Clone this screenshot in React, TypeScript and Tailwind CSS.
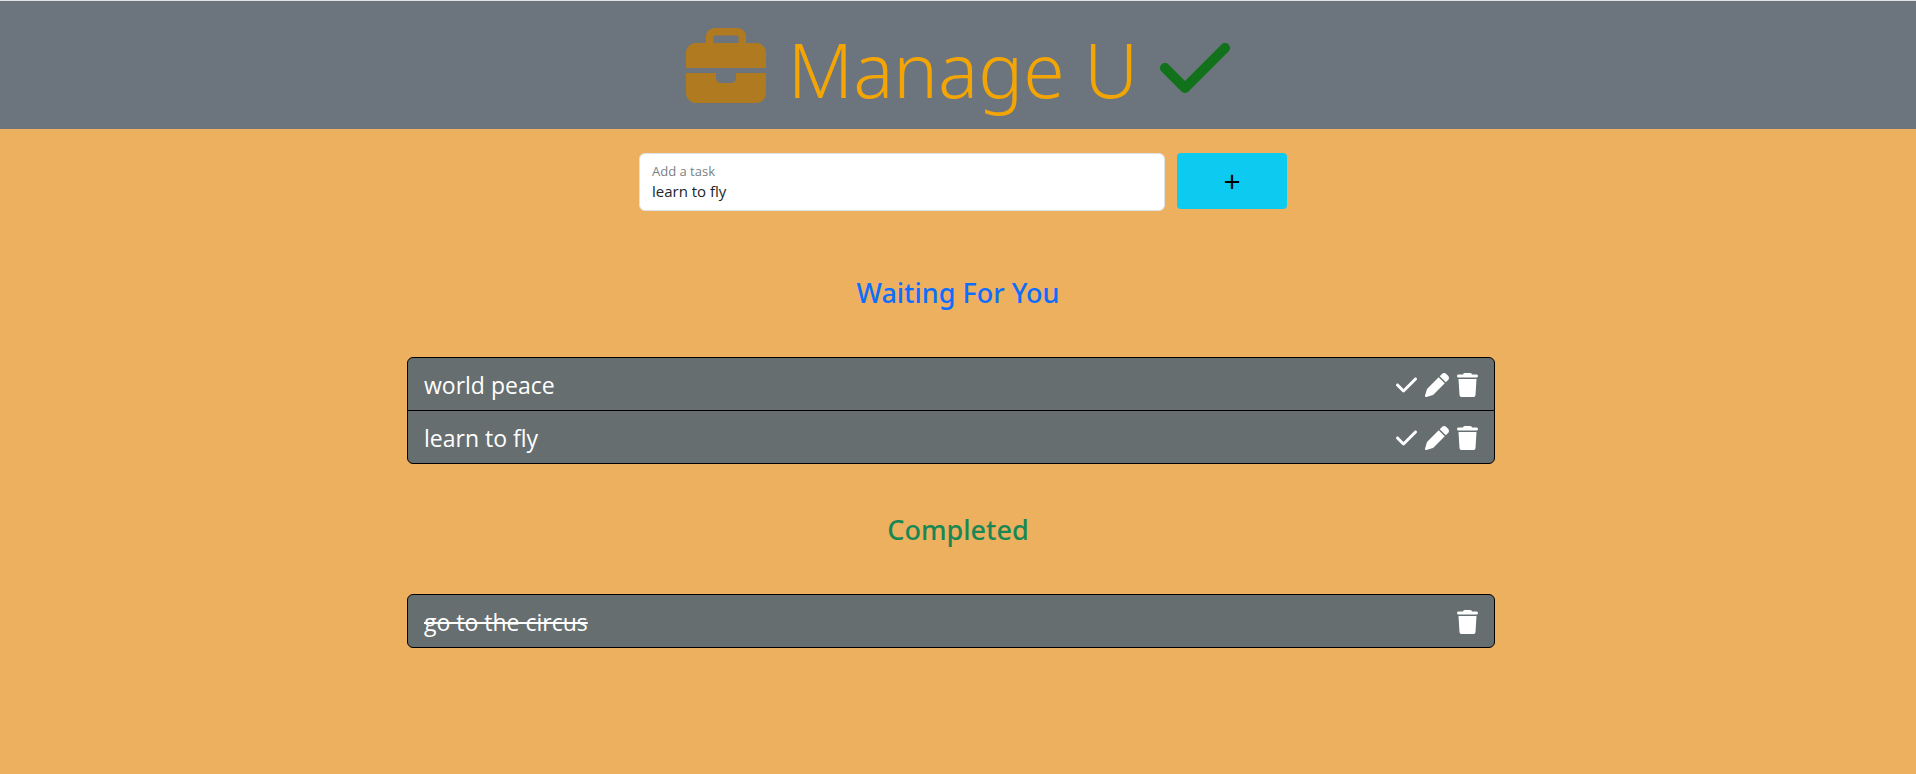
import { useState } from "react";
import { FaBriefcase, FaCheck, FaPen, FaTrash } from "react-icons/fa6";

const waiting = ["world peace", "learn to fly"];
const completed = ["go to the circus"];

function TaskList({ tasks, done = false }: { tasks: string[]; done?: boolean }) {
  return (
    <div className="mx-auto w-full max-w-[1102px] pr-3.5">
      <ul className="divide-y divide-black overflow-hidden rounded-md border border-black bg-[#666e70] text-white">
        {tasks.map((task) => (
          <li key={task} className="box-content flex h-[50px] items-center justify-between px-4 pt-0.5">
            <span className={done ? "text-[23px] line-through" : "text-[23px]"}>{task}</span>
            <span className="flex items-center gap-2 text-2xl">
              {!done && (
                <>
                  <button type="button" aria-label={`Complete ${task}`}><FaCheck className="w-[21px]" /></button>
                  <button type="button" aria-label={`Edit ${task}`}><FaPen /></button>
                </>
              )}
              <button type="button" aria-label={`Delete ${task}`}><FaTrash className="w-[21px]" /></button>
            </span>
          </li>
        ))}
      </ul>
    </div>
  );
}

export default function App() {
  const [task, setTask] = useState("learn to fly");
  return (
    <div className="min-h-screen bg-[#edb05f] font-['Open_Sans','Noto_Sans',sans-serif]">
      <header className="flex h-[129px] items-center justify-center gap-[22px] border-t border-[#dee2e6] bg-[#6c757d] pt-1.5">
        <FaBriefcase className="size-20 text-[#b07b20]" />
        <h1 className="pt-0.5 font-['Noto_Sans','Open_Sans',sans-serif] text-[75px] leading-24 font-light text-[#f3a505]">Manage U</h1>
        <FaCheck className="h-20 w-[70px] text-[#11721b]" />
      </header>
      <main>
        <form className="mx-auto flex w-full max-w-[658px] items-start gap-3 pt-6 pl-2.5" onSubmit={(e) => e.preventDefault()}>
          <div className="flex h-[58px] flex-1 flex-col rounded-md border border-[#dee2e6] bg-white px-3 pt-[7px]">
            <label htmlFor="task" className="text-[13px] leading-5 text-[#7a7f83]">Add a task</label>
            <input id="task" value={task} onChange={(e) => setTask(e.target.value)} className="w-full text-[15px] leading-5 text-[#212529] outline-none" />
          </div>
          <button type="submit" aria-label="Add" className="h-14 w-[110px] rounded bg-[#0dcaf0] pb-0.5 text-[30px] text-black">+</button>
        </form>
        <h2 className="pt-16 pb-[46px] text-center font-['Noto_Sans',sans-serif] text-[27px] leading-9 font-medium text-[#0d6efd]">Waiting For You</h2>
        <TaskList tasks={waiting} />
        <h2 className="pt-12 pb-[46px] text-center font-['Noto_Sans',sans-serif] text-[27px] leading-9 font-medium text-[#198754]">Completed</h2>
        <TaskList tasks={completed} done />
      </main>
    </div>
  );
}
